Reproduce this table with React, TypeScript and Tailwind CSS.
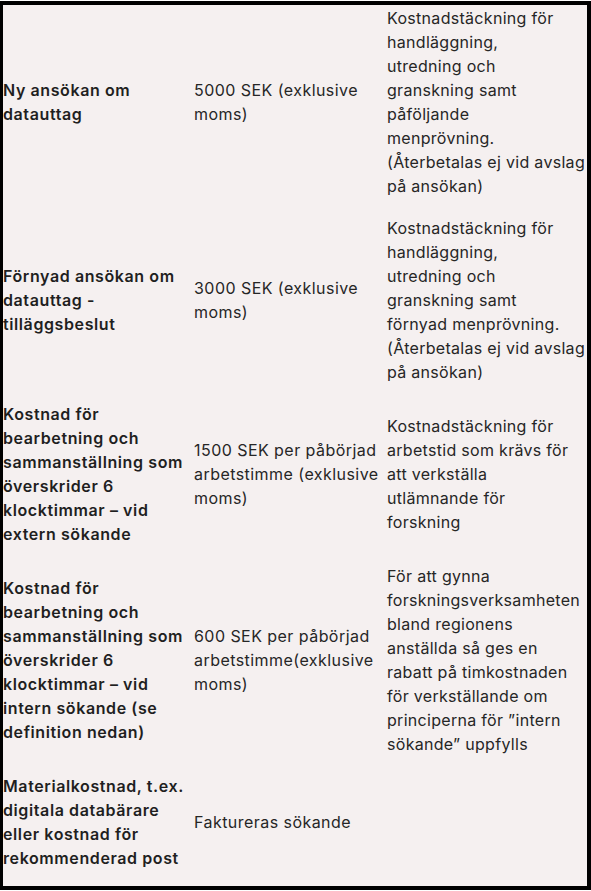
import React from "react";

type Row = { a: string[]; b: string[]; c: string[]; pt?: string };

const rows: Row[] = [
  {
    a: ["Ny ansökan om", "datauttag"],
    b: ["5000 SEK (exklusive", "moms)"],
    c: [
      "Kostnadstäckning för",
      "handläggning,",
      "utredning och",
      "granskning samt",
      "påföljande",
      "menprövning.",
      "(Återbetalas ej vid avslag",
      "på ansökan)",
    ],
    pt: "pt-[1px]",
  },
  {
    a: ["Förnyad ansökan om", "datauttag -", "tilläggsbeslut"],
    b: ["3000 SEK (exklusive", "moms)"],
    c: [
      "Kostnadstäckning för",
      "handläggning,",
      "utredning och",
      "granskning samt",
      "förnyad menprövning.",
      "(Återbetalas ej vid avslag",
      "på ansökan)",
    ],
  },
  {
    a: [
      "Kostnad för",
      "bearbetning och",
      "sammanställning som",
      "överskrider 6",
      "klocktimmar – vid",
      "extern sökande",
    ],
    b: ["1500 SEK per påbörjad", "arbetstimme (exklusive", "moms)"],
    c: [
      "Kostnadstäckning för",
      "arbetstid som krävs för",
      "att verkställa",
      "utlämnande för",
      "forskning",
    ],
  },
  {
    a: [
      "Kostnad för",
      "bearbetning och",
      "sammanställning som",
      "överskrider 6",
      "klocktimmar – vid",
      "intern sökande (se",
      "definition nedan)",
    ],
    b: ["600 SEK per påbörjad", "arbetstimme(exklusive", "moms)"],
    c: [
      "För att gynna",
      "forskningsverksamheten",
      "bland regionens",
      "anställda så ges en",
      "rabatt på timkostnaden",
      "för verkställande om",
      "principerna för ”intern",
      "sökande” uppfylls",
    ],
  },
  {
    a: [
      "Materialkostnad, t.ex.",
      "digitala databärare",
      "eller kostnad för",
      "rekommenderad post",
    ],
    b: ["Faktureras sökande"],
    c: [],
  },
];

function Lines({ lines }: { lines: string[] }) {
  return (
    <div>
      {lines.map((l, i) => (
        <div key={i} className="whitespace-nowrap">
          {l}
        </div>
      ))}
    </div>
  );
}

export default function App() {
  return (
    <div className="w-[591px] h-[891px] bg-white pt-[1px] overflow-hidden">
      <div
        className="h-[889px] bg-[#f5f0f0] border-t-[4px] border-l-[3px] border-r-[4px] border-b-[4px] border-black text-[#262626] text-[16px] leading-[24px]"
        style={{ fontFamily: "Inter, 'Open Sans', sans-serif" }}
      >
        {rows.map((r, i) => (
          <div key={i} className="grid grid-cols-[191px_193px_1fr]">
            <div className={`flex items-center ${r.pt ?? "pt-[9px]"} pb-[9px] font-semibold tracking-[0.6px] text-[#1f1f1f]`}>
              <Lines lines={r.a} />
            </div>
            <div className={`flex items-center ${r.pt ?? "pt-[9px]"} pb-[9px] tracking-[0.45px]`}>
              <Lines lines={r.b} />
            </div>
            <div className={`flex items-center ${r.pt ?? "pt-[9px]"} pb-[9px] tracking-[0.3px]`}>
              <Lines lines={r.c} />
            </div>
          </div>
        ))}
      </div>
    </div>
  );
}
